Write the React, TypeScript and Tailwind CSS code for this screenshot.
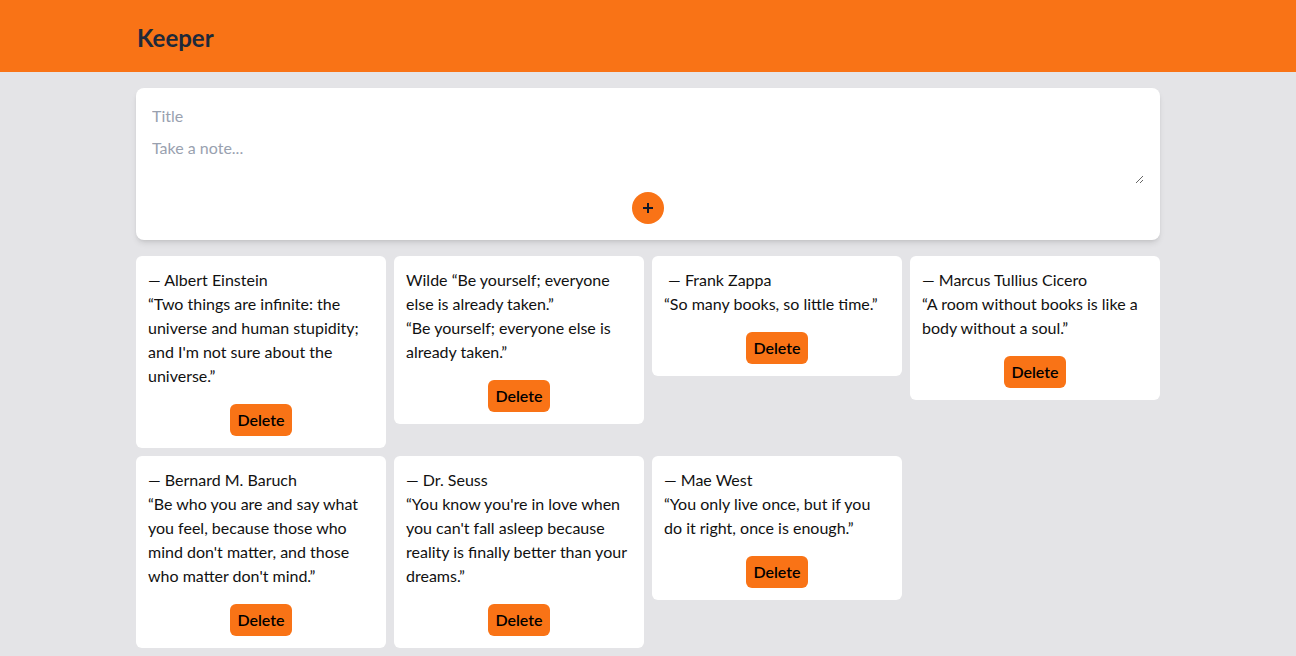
import { useState } from "react";

type Note = { title: string; content: string };

const initialNotes: Note[] = [
  { title: "— Albert Einstein", content: "“Two things are infinite: the universe and human stupidity; and I'm not sure about the universe.”" },
  { title: "Wilde “Be yourself; everyone else is already taken.”", content: "“Be yourself; everyone else is already taken.”" },
  { title: " — Frank Zappa", content: "“So many books, so little time.”" },
  { title: "— Marcus Tullius Cicero", content: "“A room without books is like a body without a soul.”" },
  { title: "— Bernard M. Baruch", content: "“Be who you are and say what you feel, because those who mind don't matter, and those who matter don't mind.”" },
  { title: "— Dr. Seuss", content: "“You know you're in love when you can't fall asleep because reality is finally better than your dreams.”" },
  { title: "— Mae West", content: "“You only live once, but if you do it right, once is enough.”" },
];

const NoteCard = ({ note, onDelete }: { note: Note; onDelete: () => void }) => (
  <div className="bg-white rounded-md p-3 flex flex-col">
    <h1 className="text-base leading-6 whitespace-pre-wrap">{note.title}</h1>
    <p className="text-base leading-6">{note.content}</p>
    <div className="flex justify-center mt-4">
      <button
        onClick={onDelete}
        className="bg-[#f97316] rounded-md h-8 px-[7px] font-semibold text-black"
      >
        Delete
      </button>
    </div>
  </div>
);

export default function App() {
  const [notes, setNotes] = useState<Note[]>(initialNotes);
  const [title, setTitle] = useState("");
  const [content, setContent] = useState("");

  const add = () => {
    if (!title && !content) return;
    setNotes([...notes, { title, content }]);
    setTitle("");
    setContent("");
  };

  return (
    <div className="min-h-screen bg-[#e4e4e7] text-[#111] font-['Lato','Noto_Sans',sans-serif]">
      <header className="bg-[#f97316] h-[72px]">
        <div className="max-w-5xl mx-auto h-full flex items-center pt-1">
          <h1 className="text-2xl font-bold text-gray-800 pl-px">Keeper</h1>
        </div>
      </header>

      <main className="max-w-5xl mx-auto pt-4 pb-4">
        {/* formulario */}
        <form
          onSubmit={(e) => { e.preventDefault(); add(); }}
          className="bg-white rounded-lg shadow-md px-4 pt-4 pb-4 flex flex-col gap-2"
        >
          <input
            value={title}
            onChange={(e) => setTitle(e.target.value)}
            placeholder="Title"
            className="h-6 text-base outline-none placeholder:text-gray-400"
          />
          <textarea
            value={content}
            onChange={(e) => setContent(e.target.value)}
            placeholder="Take a note..."
            rows={2}
            className="h-12 text-base leading-6 outline-none placeholder:text-gray-400"
          />
          <div className="flex justify-center">
            <button type="submit" className="w-8 h-8 rounded-full bg-[#f97316] text-gray-900 flex items-center justify-center">
              <svg width="12" height="12" viewBox="0 0 12 12" fill="none" stroke="currentColor" strokeWidth="2">
                <path d="M6 1v10M1 6h10" />
              </svg>
            </button>
          </div>
        </form>

        {/* notas */}
        <div className="grid grid-cols-4 gap-2 items-start mt-4">
          {notes.map((n, i) => (
            <NoteCard key={i} note={n} onDelete={() => setNotes(notes.filter((_, j) => j !== i))} />
          ))}
        </div>
      </main>
    </div>
  );
}
